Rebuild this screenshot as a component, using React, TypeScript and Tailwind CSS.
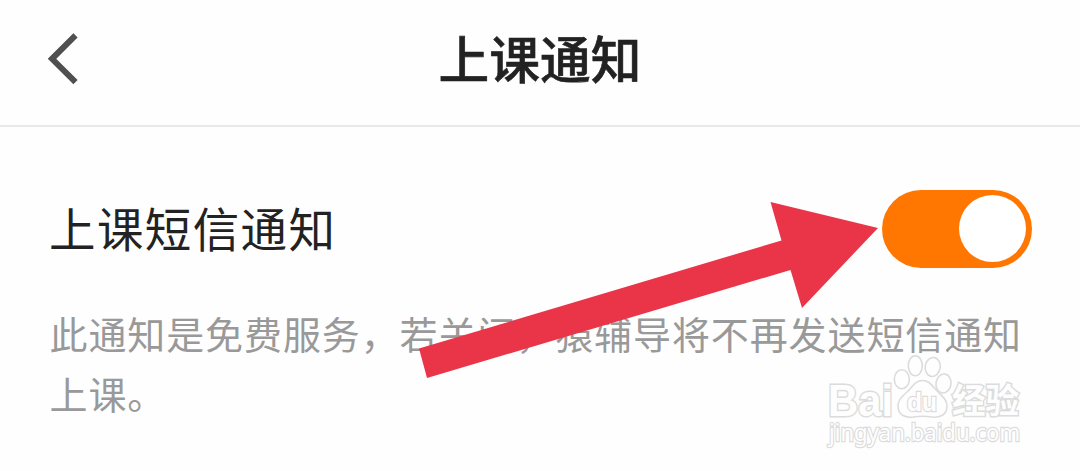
import React from "react";

const FONT = "font-['Noto_Sans_CJK_SC',sans-serif]";

function Header() {
  return (
    <header className="flex h-[127px] items-start border-b-2 border-[#e8e8e8] px-12">
      <button type="button" aria-label="返回" className="mt-8 w-[120px]">
        <svg width="32" height="54" viewBox="0 0 32 54" fill="none">
          <path d="M27.5 3.3 4 26.8 27.5 50.1" stroke="#4f4f4f" strokeWidth="6" />
        </svg>
      </button>
      <h1 className="mt-[21px] flex-1 text-center text-[50.7px] leading-[72px] font-medium text-[#222] [-webkit-text-stroke:0.6px_#222]">
        上课通知
      </h1>
      <div className="w-[120px]" />
    </header>
  );
}

function Toggle() {
  return (
    <div role="switch" aria-checked="true" className="flex h-[78px] w-[150px] items-center justify-end rounded-full bg-[#ff7700] pr-1.5">
      <div className="h-[67px] w-[67px] rounded-full bg-white" />
    </div>
  );
}

function Arrow() {
  return (
    <svg className="absolute inset-0" width="1080" height="471" viewBox="0 0 1080 471">
      <polygon points="878,228 770.5,202 781.5,240.5 419,348.5 427,378 790.5,270 802,308" fill="#ea3549" />
    </svg>
  );
}

function Watermark() {
  return (
    <svg
      className="absolute top-[350px] left-[820px]"
      width="210"
      height="100"
      viewBox="0 0 210 100"
      fill="#fefefe"
      stroke="#dcdcdc"
      strokeWidth="1.6"
    >
      <g strokeWidth="3" paintOrder="stroke" fontWeight="700">
        <text x="8" y="65.5" fontSize="45" textLength="65" lengthAdjust="spacingAndGlyphs" fontFamily="Liberation Sans">
          Bai
        </text>
        <text x="132" y="63" fontSize="34" textLength="67" lengthAdjust="spacingAndGlyphs" fontFamily="Noto Sans CJK SC">
          经验
        </text>
      </g>
      <ellipse cx="81.8" cy="29.3" rx="7.5" ry="9.5" />
      <ellipse cx="95.3" cy="15.8" rx="7" ry="10" />
      <ellipse cx="112.7" cy="17" rx="7.5" ry="9.5" transform="rotate(10 112.7 17)" />
      <ellipse cx="123.5" cy="33.5" rx="7.5" ry="9.5" transform="rotate(10 123.5 33.5)" />
      <path d="M102.500 30.500c-8 0-10 7-16 12-5 4-8.500 7.500-8.500 13.500 0 9 7 12 15 11 7-1.200 12-1.200 19 0 8 1 15-2 15-11 0-6-4-9-8.500-13.500-5.500-5-8-12-16-12Z" />
      <text x="87" y="61" fontSize="26" fontWeight="700" strokeWidth="2.4" paintOrder="stroke" textLength="30" lengthAdjust="spacingAndGlyphs" fontFamily="Liberation Sans">
        du
      </text>
      <text
        x="9"
        y="91"
        fontSize="23"
        strokeWidth="2.4"
        paintOrder="stroke"
        textLength="191"
        lengthAdjust="spacingAndGlyphs"
        fontFamily="Noto Sans"
      >
        jingyan.baidu.com
      </text>
    </svg>
  );
}

export default function App() {
  return (
    <div className={`relative h-[471px] w-[1080px] overflow-hidden bg-[#fefefe] ${FONT}`}>
      <Header />

      <main className="px-12">
        <div className="flex items-start justify-between pt-[62.5px]">
          <h2 className="pt-[2px] pl-px text-[46.5px] leading-[70px] tracking-[1.4px] text-[#222]">上课短信通知</h2>
          <Toggle />
        </div>
        <p className="mt-[35px] -mr-5 pl-[1.5px] text-[38px] leading-[60px] tracking-[0.9px] text-[#999]">
          此通知是免费服务，若关闭，猿辅导将不再发送短信通知上课。
        </p>
      </main>

      <Arrow />
      <Watermark />
    </div>
  );
}
